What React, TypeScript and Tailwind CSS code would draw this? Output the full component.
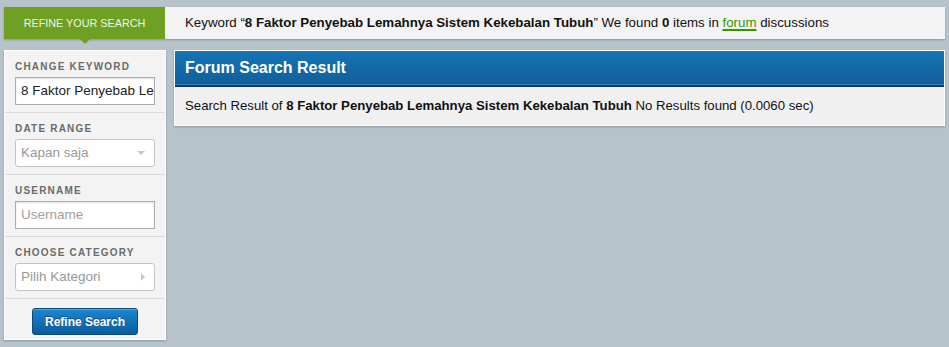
const font = { fontFamily: '"Liberation Sans", Arial, sans-serif' };

function Label({ children }: { children: string }) {
  return (
    <div className="h-[14px] text-[10px] font-bold uppercase leading-[14px] tracking-[1.2px] text-[#6b6b6b]">
      {children}
    </div>
  );
}

function Section({ label, children }: { label: string; children: React.ReactNode }) {
  return (
    <div className="border-b border-[#dcdcdc] px-[10px] pb-[7px] pt-[9px]">
      <Label>{label}</Label>
      <div className="mt-[3px]">{children}</div>
    </div>
  );
}

function TextBox({ value, placeholder }: { value?: string; placeholder?: string }) {
  return (
    <div className="flex h-[28px] w-[140px] items-center overflow-hidden whitespace-nowrap border border-[#acacac] bg-white px-[5px] text-[13.5px] shadow-[inset_0_1px_2px_rgba(0,0,0,0.12)]">
      {value ? (
        <span className="text-[#222]">{value}</span>
      ) : (
        <span className="text-[#a0a0a0]">{placeholder}</span>
      )}
    </div>
  );
}

function Select({ text, arrow }: { text: string; arrow: "down" | "right" }) {
  return (
    <div className="flex h-[28px] w-[140px] items-center justify-between rounded-[3px] border border-[#c4c4c4] bg-white pl-[5px] pr-[9px] text-[13.5px] text-[#999]">
      <span>{text}</span>
      {arrow === "down" ? (
        <span className="h-0 w-0 border-x-[4px] border-t-[4px] border-x-transparent border-t-[#c8c8c8]" />
      ) : (
        <span className="h-0 w-0 border-y-[4px] border-l-[4px] border-y-transparent border-l-[#c8c8c8]" />
      )}
    </div>
  );
}

export default function App() {
  return (
    <div style={font} className="h-[347px] w-[949px] overflow-hidden bg-[#b7c3cb] px-[4px] pt-[7px]">
      <div className="flex h-[32px] bg-[#f3f3f3] shadow-[0_1px_2px_rgba(0,0,0,0.25)]">
        <div className="relative flex w-[161px] items-center justify-center bg-[#6ea024] text-[10.8px] text-[#eef5e2]">
          REFINE YOUR SEARCH
          <span className="absolute left-[76px] top-[32px] h-0 w-0 border-x-[5px] border-t-[5px] border-x-transparent border-t-[#6ea024]" />
        </div>
        <div className="flex items-center pl-[20px] text-[13.3px] text-[#111]">
          Keyword “<b>8 Faktor Penyebab Lemahnya Sistem Kekebalan Tubuh</b>” We found&nbsp;<b>0</b>&nbsp;items in&nbsp;
          <span className="text-[#2f9a00] underline decoration-[#2f9a00] decoration-2 underline-offset-2">forum</span>
          &nbsp;discussions
        </div>
      </div>

      <div className="mt-[11px] flex items-start gap-[8px]">
        <div className="w-[162px] border border-white bg-[#f3f3f3] shadow-[0_1px_2px_rgba(0,0,0,0.25)]">
          <Section label="Change Keyword">
            <TextBox value="8 Faktor Penyebab Le" />
          </Section>
          <Section label="Date Range">
            <Select text="Kapan saja" arrow="down" />
          </Section>
          <Section label="Username">
            <TextBox placeholder="Username" />
          </Section>
          <Section label="Choose Category">
            <Select text="Pilih Kategori" arrow="right" />
          </Section>
          <div className="flex justify-center pb-[4px] pt-[9px]">
            <button
              type="button"
              className="h-[27px] w-[106px] rounded-[3px] border border-[#0b4a7c] bg-gradient-to-b from-[#1c86d0] to-[#0b5c9e] text-[12px] font-bold text-white shadow-[inset_0_1px_0_rgba(255,255,255,0.25)] [text-shadow:0_-1px_0_rgba(0,0,0,0.35)]"
            >
              Refine Search
            </button>
          </div>
        </div>

        <div className="flex-1 border border-white bg-[#f0f0f0] shadow-[0_1px_2px_rgba(0,0,0,0.25)]">
          <div className="flex h-[36px] items-center border-b-2 border-[#0b3c62] bg-gradient-to-b from-[#1674b6] to-[#0f5f99] px-[10px] text-[16px] font-bold text-white shadow-[inset_0_-1px_0_rgba(255,255,255,0.2)]">
            Forum Search Result
          </div>
          <div className="flex h-[38px] items-center px-[10px] text-[13.2px] text-[#111]">
            Search Result of&nbsp;<b>8 Faktor Penyebab Lemahnya Sistem Kekebalan Tubuh</b>&nbsp;No Results found (0.0060 sec)
          </div>
        </div>
      </div>
    </div>
  );
}
